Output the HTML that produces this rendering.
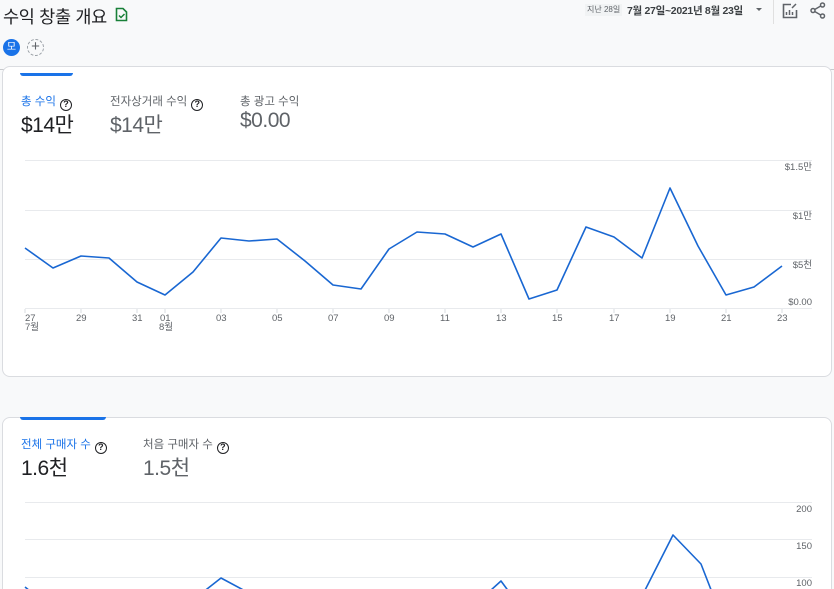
<!DOCTYPE html>
<html><head><meta charset="utf-8"><style>
*{margin:0;padding:0;box-sizing:border-box}
html,body{width:834px;height:589px;overflow:hidden}
body{background:#f8f9fa;font-family:"Liberation Sans","Noto Sans CJK KR",sans-serif;color:#202124;position:relative}
.abs{position:absolute}
.card{position:absolute;background:#fff;border:1px solid #dadce0;border-radius:8px}
.lbl{font-size:11.5px;color:#5f6368;white-space:nowrap}
.big{font-size:21px;color:#202124;white-space:nowrap;letter-spacing:-0.5px}
.q{display:inline-block;width:12px;height:12px;border:1.6px solid #202124;border-radius:50%;font-size:9px;line-height:9px;text-align:center;font-weight:bold;color:#202124;vertical-align:-2px;margin-left:4px}
.ax{font-size:9.5px;color:#5f6368}
</style></head><body>
<div class="abs" style="left:3px;top:4px;font-size:17.5px;color:#202124;letter-spacing:-0.3px">수익 창출 개요</div>
<svg class="abs" style="left:115px;top:7px" width="13" height="15" viewBox="0 0 13 15"><path d="M1.5 1.5h6.5l3.5 3.5v8.5h-10z" fill="none" stroke="#188038" stroke-width="1.6"/><path d="M4 8.5l2 2 3.5-3.5" fill="none" stroke="#188038" stroke-width="1.5"/></svg>
<div class="abs" style="left:585px;top:4px;background:#f1f3f4;font-size:8px;color:#5f6368;padding:0 2px;line-height:12px">지난 28일</div>
<div class="abs" style="left:627px;top:3px;font-size:10.5px;font-weight:bold;color:#3c4043;letter-spacing:-0.3px;white-space:nowrap">7월 27일~2021년 8월 23일</div>
<div class="abs" style="left:756px;top:8px;width:0;height:0;border-left:3.5px solid transparent;border-right:3.5px solid transparent;border-top:3.5px solid #5f6368"></div>
<div class="abs" style="left:773px;top:0;width:1px;height:24px;background:#e0e0e0"></div>
<svg class="abs" style="left:782px;top:3px" width="16" height="16" viewBox="0 0 16 16"><path d="M9 1.5H1.5v13h13V7" fill="none" stroke="#5f6368" stroke-width="1.6"/><path d="M4.5 12V9M7.5 12V7M10.5 12V9" stroke="#5f6368" stroke-width="1.5"/><path d="M10 5l4-4" stroke="#5f6368" stroke-width="1.5"/></svg>
<svg class="abs" style="left:810px;top:2px" width="16" height="17" viewBox="0 0 16 17"><circle cx="12.5" cy="3" r="2" fill="none" stroke="#5f6368" stroke-width="1.5"/><circle cx="3" cy="8.5" r="2" fill="none" stroke="#5f6368" stroke-width="1.5"/><circle cx="12.5" cy="14" r="2" fill="none" stroke="#5f6368" stroke-width="1.5"/><path d="M4.7 7.5l6-3.5M4.7 9.5l6 3.5" stroke="#5f6368" stroke-width="1.4"/></svg>
<div class="abs" style="left:3px;top:39px;width:17px;height:17px;border-radius:50%;background:#1a73e8;color:#fff;font-size:10px;text-align:center;line-height:17px">모</div>
<div class="abs" style="left:27px;top:39px;width:17px;height:17px;border-radius:50%;border:1px dashed #9aa0a6;color:#5f6368;font-size:15px;text-align:center;line-height:14px">+</div>
<div class="abs" style="left:0;top:69px;width:834px;height:1px;background:#c8cacd"></div>

<div class="card" style="left:2px;top:66px;width:830px;height:311px"></div>
<div class="abs" style="left:20px;top:73px;width:53px;height:3px;background:#1a73e8;border-radius:0 0 3px 3px"></div>
<div class="abs lbl" style="left:21px;top:93px;color:#1a73e8">총 수익<span class="q">?</span></div>
<div class="abs big" style="left:21px;top:109px">$14만</div>
<div class="abs lbl" style="left:110px;top:93px">전자상거래 수익<span class="q">?</span></div>
<div class="abs big" style="left:110px;top:109px;color:#5f6368">$14만</div>
<div class="abs lbl" style="left:240px;top:93px">총 광고 수익</div>
<div class="abs big" style="left:240px;top:109px;color:#5f6368">$0.00</div>

<div class="card" style="left:2px;top:417px;width:830px;height:250px"></div>
<div class="abs" style="left:20px;top:417px;width:86px;height:3px;background:#1a73e8;border-radius:0 0 3px 3px"></div>
<div class="abs lbl" style="left:21px;top:436px;color:#1a73e8">전체 구매자 수<span class="q">?</span></div>
<div class="abs big" style="left:21px;top:452px">1.6천</div>
<div class="abs lbl" style="left:143px;top:436px">처음 구매자 수<span class="q">?</span></div>
<div class="abs big" style="left:143px;top:452px;color:#5f6368">1.5천</div>

<svg class="abs" style="left:0;top:0" width="834" height="589">
<g stroke="#e8eaed" stroke-width="1"><line x1="25" y1="160.5" x2="812" y2="160.5"/><line x1="25" y1="210.5" x2="812" y2="210.5"/><line x1="25" y1="259.5" x2="812" y2="259.5"/><line x1="25" y1="308.5" x2="812" y2="308.5"/>
<line x1="25" y1="502.5" x2="812" y2="502.5"/><line x1="25" y1="539.5" x2="812" y2="539.5"/><line x1="25" y1="577.5" x2="812" y2="577.5"/></g>
<g stroke="#dadce0"><line x1="25" y1="309" x2="25" y2="313"/><line x1="81" y1="309" x2="81" y2="313"/><line x1="137" y1="309" x2="137" y2="313"/><line x1="165" y1="309" x2="165" y2="313"/><line x1="221" y1="309" x2="221" y2="313"/><line x1="277" y1="309" x2="277" y2="313"/><line x1="333" y1="309" x2="333" y2="313"/><line x1="389" y1="309" x2="389" y2="313"/><line x1="445" y1="309" x2="445" y2="313"/><line x1="501" y1="309" x2="501" y2="313"/><line x1="557" y1="309" x2="557" y2="313"/><line x1="614" y1="309" x2="614" y2="313"/><line x1="670" y1="309" x2="670" y2="313"/><line x1="726" y1="309" x2="726" y2="313"/><line x1="782" y1="309" x2="782" y2="313"/></g>
<polyline fill="none" stroke="#1967d2" stroke-width="1.6" stroke-linejoin="round" points="25,248 53,268 81,256 109,258 137,282 165,295 193,272 221,238 249,241 277,239 305,261 333,285 361,289 389,249 417,232 445,234 473,247 501,234 529,299 557,290 586,227 614,237 642,258 670,188 698,246 726,295 754,287 782,266"/>
<polyline fill="none" stroke="#1967d2" stroke-width="1.6" stroke-linejoin="round" points="25,587 35,595 193,600 221,578 249,593 277,600 480,600 501,581 515,600 640,600 673,535 701,564 715,600"/>
<g class="ax" fill="#5f6368" font-size="9.5">
<text x="812" y="170" text-anchor="end">$1.5만</text><text x="812" y="219" text-anchor="end">$1만</text><text x="812" y="268" text-anchor="end">$5천</text><text x="812" y="305" text-anchor="end">$0.00</text>
<text x="812" y="512" text-anchor="end">200</text><text x="812" y="549" text-anchor="end">150</text><text x="812" y="586" text-anchor="end">100</text>
<text x="25" y="321">27</text><text x="25" y="330">7월</text><text x="76" y="321">29</text><text x="132" y="321">31</text><text x="160" y="321">01</text><text x="159" y="330">8월</text><text x="216" y="321">03</text><text x="272" y="321">05</text><text x="328" y="321">07</text><text x="384" y="321">09</text><text x="440" y="321">11</text><text x="496" y="321">13</text><text x="552" y="321">15</text><text x="609" y="321">17</text><text x="665" y="321">19</text><text x="721" y="321">21</text><text x="777" y="321">23</text>
</g>
</svg>
</body></html>
